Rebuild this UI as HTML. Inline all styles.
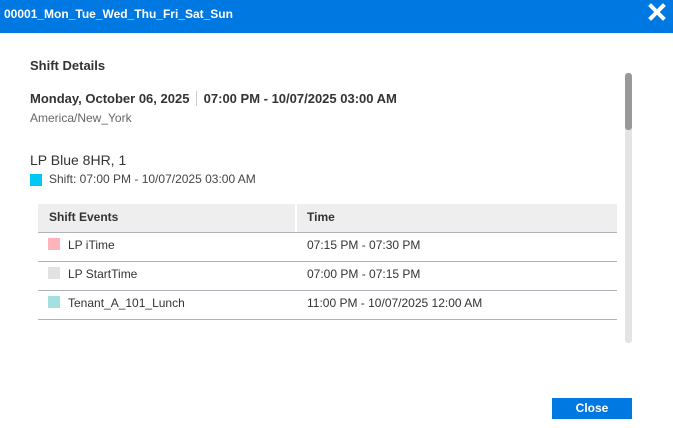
<!DOCTYPE html>
<html><head><style>
body{margin:0;width:673px;height:428px;background:#fff;font-family:"Liberation Sans",Arial,sans-serif;position:relative;overflow:hidden;color:#333}
.hdr{position:absolute;left:0;top:0;width:673px;height:33px;background:#0078e1}
.ttl{position:absolute;left:4px;top:7px;color:#fff;font-weight:bold;font-size:12px}
.a{position:absolute;white-space:nowrap}
.sq{position:absolute;width:12px;height:12px}
.line{position:absolute;left:38px;width:579px;height:1px;background:#b0b4ba}
</style></head><body>
<div class="hdr"><div class="ttl">00001_Mon_Tue_Wed_Thu_Fri_Sat_Sun</div>
<svg style="position:absolute;left:648px;top:3px" width="18" height="18" viewBox="0 0 18 18"><path d="M3 3L15 15M15 3L3 15" stroke="#fff" stroke-width="4" stroke-linecap="square"/></svg></div>
<div class="a" style="left:30px;top:58px;font-size:13px;font-weight:bold">Shift Details</div>
<div class="a" style="left:30px;top:91px;font-size:13px;font-weight:bold">Monday, October 06, 2025 <span style="display:inline-block;width:1px;height:15px;background:#ccc;vertical-align:-3px;margin:0 3px"></span> 07:00 PM - 10/07/2025 03:00 AM</div>
<div class="a" style="left:30px;top:111px;font-size:12px;color:#666">America/New_York</div>
<div class="a" style="left:30px;top:152px;font-size:14px">LP Blue 8HR, 1</div>
<div class="sq" style="left:30px;top:174px;background:#00c8f5"></div>
<div class="a" style="left:49px;top:172px;font-size:12px;color:#444">Shift: 07:00 PM - 10/07/2025 03:00 AM</div>
<div class="a" style="left:38px;top:204px;width:257px;height:28px;background:#eee"></div>
<div class="a" style="left:297px;top:204px;width:320px;height:28px;background:#eee"></div>
<div class="a" style="left:49px;top:210px;font-size:12px;font-weight:bold">Shift Events</div>
<div class="a" style="left:307px;top:210px;font-size:12px;font-weight:bold">Time</div>
<div class="line" style="top:232px"></div>
<div class="line" style="top:261px"></div>
<div class="line" style="top:290px"></div>
<div class="line" style="top:319px"></div>
<div class="sq" style="left:48px;top:238px;background:#ffb3bd"></div>
<div class="a" style="left:68px;top:238px;font-size:12px">LP iTime</div>
<div class="a" style="left:307px;top:238px;font-size:12px">07:15 PM - 07:30 PM</div>
<div class="sq" style="left:48px;top:267px;background:#e2e2e2"></div>
<div class="a" style="left:68px;top:267px;font-size:12px">LP StartTime</div>
<div class="a" style="left:307px;top:267px;font-size:12px">07:00 PM - 07:15 PM</div>
<div class="sq" style="left:48px;top:296px;background:#a4e0e0"></div>
<div class="a" style="left:68px;top:296px;font-size:12px">Tenant_A_101_Lunch</div>
<div class="a" style="left:307px;top:296px;font-size:12px">11:00 PM - 10/07/2025 12:00 AM</div>
<div class="a" style="left:625px;top:73px;width:7px;height:270px;background:#e4e4e4;border-radius:3px"></div>
<div class="a" style="left:625px;top:73px;width:7px;height:57px;background:#999;border-radius:3px"></div>
<div class="a" style="left:552px;top:398px;width:80px;height:21px;background:#0078e1;color:#fff;font-weight:bold;font-size:12px;text-align:center;line-height:21px">Close</div>
</body></html>
